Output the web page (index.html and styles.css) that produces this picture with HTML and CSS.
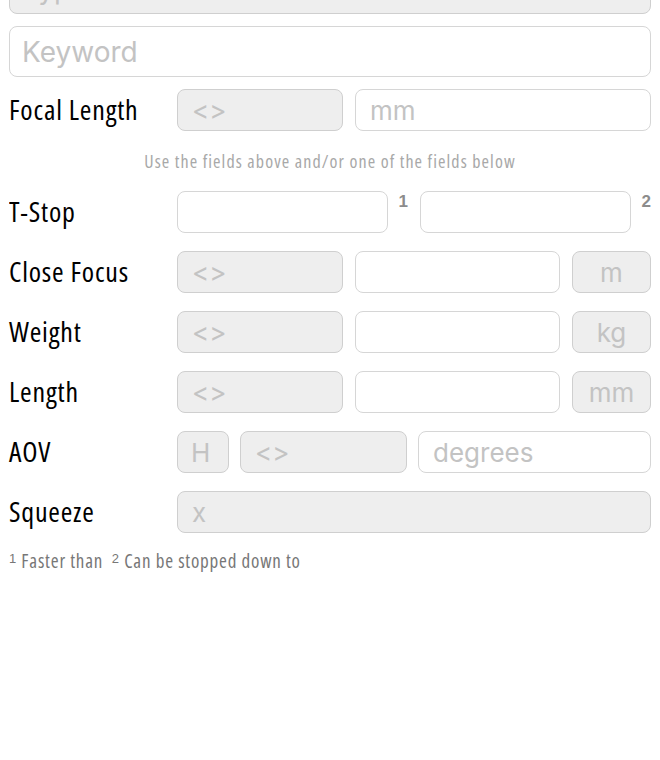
FILE: index.html
```html
<!DOCTYPE html>
<html lang="en">
<head>
    <meta charset="UTF-8">
    <meta name="viewport" content="width=device-width, initial-scale=1.0">
    <title>Lens Search</title>
    <link rel="stylesheet" href="styles.css">
</head>
<body>
    <div class="form">
        <input class="box big gray first" type="text" placeholder="Type">
        <input class="box big" type="text" placeholder="Keyword">

        <div class="row">
            <label class="label">Focal Length</label>
            <div class="fields">
                <input class="box gray w166" type="text" placeholder="&lt;&gt;">
                <input class="box grow" type="text" placeholder="mm">
            </div>
        </div>

        <p class="hint">Use the fields above and/or one of the fields below</p>

        <div class="row">
            <label class="label">T-Stop</label>
            <div class="fields">
                <div class="cell">
                    <input class="box grow" type="text">
                    <span class="sup">1</span>
                </div>
                <div class="cell">
                    <input class="box grow" type="text">
                    <span class="sup">2</span>
                </div>
            </div>
        </div>

        <div class="row">
            <label class="label">Close Focus</label>
            <div class="fields">
                <input class="box gray w166" type="text" placeholder="&lt;&gt;">
                <input class="box grow" type="text">
                <input class="box gray unit" type="text" placeholder="m">
            </div>
        </div>

        <div class="row">
            <label class="label">Weight</label>
            <div class="fields">
                <input class="box gray w166" type="text" placeholder="&lt;&gt;">
                <input class="box grow" type="text">
                <input class="box gray unit" type="text" placeholder="kg">
            </div>
        </div>

        <div class="row">
            <label class="label">Length</label>
            <div class="fields">
                <input class="box gray w166" type="text" placeholder="&lt;&gt;">
                <input class="box grow" type="text">
                <input class="box gray unit" type="text" placeholder="mm">
            </div>
        </div>

        <div class="row">
            <label class="label">AOV</label>
            <div class="fields tight">
                <input class="box gray small" type="text" placeholder="H">
                <input class="box gray w167" type="text" placeholder="&lt;&gt;">
                <input class="box grow" type="text" placeholder="degrees">
            </div>
        </div>

        <div class="row">
            <label class="label">Squeeze</label>
            <div class="fields">
                <input class="box gray grow" type="text" placeholder="x">
            </div>
        </div>

        <p class="notes"><span class="num">1</span> Faster than&nbsp; <span class="num">2</span> Can be stopped down to</p>
    </div>
</body>
</html>
```

FILE: styles.css
```css
body {
    margin: 0;
    background-color: #fff;
    color: #000;
    font-family: "Open Sans", "Noto Sans", sans-serif;
    font-stretch: 75%;
}
.form {
    padding: 0 9px;
    display: flex;
    flex-direction: column;
    gap: 12px;
}
.box {
    box-sizing: border-box;
    height: 42px;
    margin: 0;
    padding: 0 14px;
    border: 1px solid #d6d6d6;
    border-radius: 8px;
    background-color: #fff;
    font-family: Inter, "Liberation Sans", sans-serif;
    font-stretch: normal;
    font-size: 26px;
    color: #333;
    outline: none;
    min-width: 0;
}
.box::placeholder {
    color: #c3c3c3;
}
.big {
    height: 51px;
    width: 100%;
    padding: 0 12px;
    font-size: 28px;
}
.first {
    margin-top: -37px;
}
.gray {
    background-color: #eeeeee;
    border-color: #cfcfcf;
}
.row {
    display: flex;
    align-items: center;
    margin-bottom: 6px;
}
.label {
    width: 168px;
    flex: none;
    font-size: 28px;
    letter-spacing: 0.8px;
    margin-top: -3px;
}
.fields {
    flex: 1;
    min-width: 0;
    display: flex;
    gap: 12px;
}
.fields.tight {
    gap: 11px;
}
.w166 {
    width: 166px;
    flex: none;
}
.w167 {
    width: 167px;
    flex: none;
}
.small {
    width: 52px;
    flex: none;
    padding: 0 13px;
}
.unit {
    width: 79px;
    flex: none;
    padding: 0;
    text-align: center;
}
.grow {
    flex: 1;
    width: 0;
}
.cell {
    flex: 1;
    min-width: 0;
    display: flex;
    align-items: flex-start;
}
.sup {
    width: 20px;
    flex: none;
    text-align: right;
    font-family: "Liberation Sans", sans-serif;
    font-stretch: normal;
    font-size: 17px;
    font-weight: bold;
    color: #8c8c8c;
    margin-top: 1px;
}
.hint {
    margin: 0;
    height: 30px;
    line-height: 24px;
    text-align: center;
    font-size: 18px;
    letter-spacing: 1.1px;
    color: #a8a8a8;
}
.notes {
    margin: -3px 0 0;
    font-size: 19px;
    letter-spacing: 0.8px;
    line-height: 22px;
    color: #777;
}
.num {
    font-family: "Liberation Sans", sans-serif;
    font-stretch: normal;
    font-size: 13px;
    vertical-align: 5px;
}
```
